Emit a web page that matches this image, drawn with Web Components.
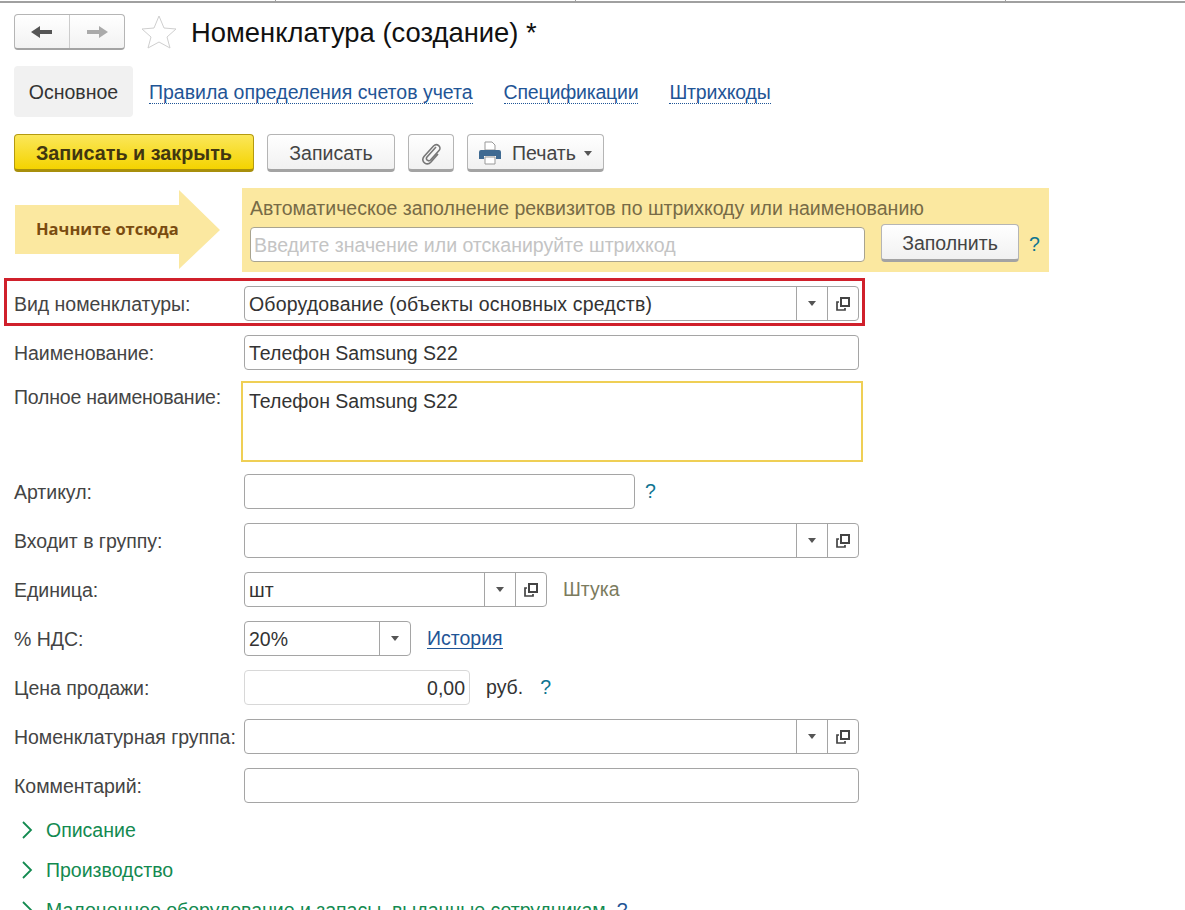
<!DOCTYPE html>
<html>
<head>
<meta charset="utf-8">
<title>Номенклатура</title>
<style>
  html, body { margin: 0; background: #fff; }
  body { height: 910px; overflow: hidden; font: 19.5px "Liberation Sans", Arial, sans-serif; color: #333; }
</style>
</head>
<body>
<item-form></item-form>

<script>
const copyIcon = `<svg width="16" height="16" viewBox="0 0 16 16" fill="none" stroke="#444" stroke-width="2"><path d="M6 2h8v8H6z"/><path d="M4 6H2v8h8v-2" stroke-width="1.7"/></svg>`

class ToolBtn extends HTMLElement {
  constructor() {
    super()
    this.attachShadow({ mode: "open" })
    this.shadowRoot.innerHTML = `
      <style>
        :host { display: inline-flex; align-items: center; justify-content: center; gap: 11px; box-sizing: border-box; height: 38px; padding: 2px 0 0; border: 1px solid #b5b5b5; border-bottom: 3px solid #a3a3a3; border-radius: 4px; background: linear-gradient(#fff, #f1f1f1); color: #444; white-space: nowrap; }
        :host([primary]) { border-color: #b49a10; border-bottom-color: #a88f0c; background: linear-gradient(#fbe75a, #f4d300); color: #413610; font-weight: bold; font-size: 19.8px; }
      </style>
      <slot></slot>`
  }
}

class PageTabs extends HTMLElement {
  constructor() {
    super()
    this.attachShadow({ mode: "open" })
    this.shadowRoot.innerHTML = `
      <style>
        :host { display: flex; align-items: center; gap: 31px; height: 51px; }
        .on { box-sizing: border-box; width: 119px; height: 51px; margin-right: -15px; padding-top: 2px; display: flex; align-items: center; justify-content: center; background: #f1f1f1; border-radius: 4px; color: #333; }
        span { margin-top: 2px; color: #1f5596; border-bottom: 1px dotted #1f5596; line-height: 21px; letter-spacing: -0.2px; }
      </style>
      <div class="on">Основное</div>
      <span style="letter-spacing:0">Правила определения счетов учета</span>
      <span>Спецификации</span>
      <span>Штрихкоды</span>`
  }
}

class TextField extends HTMLElement {
  constructor() {
    super()
    this.attachShadow({ mode: "open" })
  }
  connectedCallback() {
    const w = this.getAttribute("width") || "615"
    const buttons = this.getAttribute("buttons") || ""
    let btns = ""
    if (buttons.includes("d")) btns += `<div class="b"><i></i></div>`
    if (buttons.includes("o")) btns += `<div class="b">${copyIcon}</div>`
    this.shadowRoot.innerHTML = `
      <style>
        :host { display: flex; align-items: center; height: 35px; }
        label { width: 230px; margin-left: 14px; padding-top: 2px; flex: none; color: #444; white-space: nowrap; letter-spacing: -0.03px; }
        .box { display: flex; box-sizing: border-box; height: 35px; width: ${w}px; border: 1px solid #a5a5a5; border-radius: 4px; background: #fff; flex: none; }
        :host([soft]) .box { border-color: #d8d8d8; }
        .val { flex: 1; padding: 2px 4px 0 4px; display: flex; align-items: center; color: #333; white-space: nowrap; }
        :host([right]) .val { justify-content: flex-end; }
        .b { width: 30px; border-left: 1px solid #a5a5a5; display: flex; align-items: center; justify-content: center; }
        .b i { width: 0; height: 0; border: 4px solid transparent; border-top: 5px solid #555; border-bottom: 0; }
        .after { display: flex; align-items: center; }
      </style>
      <label>${this.getAttribute("label")}</label>
      <div class="box"><div class="val"><slot></slot></div>${btns}</div>
      <div class="after"><slot name="after"></slot></div>`
  }
}

class SectionRow extends HTMLElement {
  constructor() {
    super()
    this.attachShadow({ mode: "open" })
    this.shadowRoot.innerHTML = `
      <style>
        :host { display: flex; align-items: center; gap: 13px; height: 24px; margin-left: 21px; color: #138a50; white-space: nowrap; }
      </style>
      <svg width="12" height="18" viewBox="0 0 12 18" fill="none" stroke="#138a50" stroke-width="1.8"><path d="M2 1l8 8-8 8"/></svg>
      <slot></slot>`
  }
}

class ItemForm extends HTMLElement {
  constructor() {
    super()
    this.attachShadow({ mode: "open" })
    this.shadowRoot.innerHTML = `
      <style>
        :host { display: block; position: relative; height: 910px; overflow: hidden; }
        .topline { height: 2px; margin-top: 1px; background: #a0a0a0; margin-bottom: 11px; }
        .tick { position: absolute; top: 0; width: 1px; height: 2px; background: #a0a0a0; }
        .head { display: flex; align-items: center; height: 36px; margin-left: 14px; }
        .nav { display: flex; box-sizing: border-box; width: 111px; height: 36px; border: 1px solid #b5b5b5; border-bottom: 2px solid #a3a3a3; border-radius: 4px; background: linear-gradient(#fff, #f2f2f2); }
        .nav div { flex: 1; display: flex; align-items: center; justify-content: center; }
        .nav div + div { border-left: 1px solid #ccc; }
        h1 { margin: 0 0 0 14px; padding-top: 2px; font-size: 27.4px; font-weight: normal; color: #111; white-space: nowrap; }
        .star { margin-left: 16px; }
        page-tabs { margin: 16px 0 0 14px; }
        .cmd { display: flex; gap: 13px; margin: 17px 0 0 14px; }
        .start { display: flex; margin: 16px 0 0 14px; height: 84px; }
        .arrow { position: relative; width: 206px; margin-right: 22px; display: flex; align-items: center; padding: 0 0 3px 22px; box-sizing: border-box; }
        .arrow svg { position: absolute; left: 0; top: 0; }
        .arrow b { position: relative; font: bold 16.500px "Open Sans", sans-serif; color: #7a4c10; white-space: nowrap; }
        .panel { box-sizing: border-box; width: 807px; background: #fbe8a0; padding: 9px 8px 0; }
        .panel p { margin: 0; height: 22px; color: #776b46; white-space: nowrap; }
        .line { display: flex; align-items: center; margin-top: 8px; }
        .input { box-sizing: border-box; width: 615px; height: 35px; border: 1px solid #a9a48f; border-radius: 4px; background: #fff; color: #c4c4c4; display: flex; align-items: center; padding: 2px 0 0 3px; white-space: nowrap; }
        .line tool-btn { width: 138px; margin: -3px 0 0 16px; }
        .q { color: #0e7491; }
        .line .q { margin-left: 10px; }
        .fields { margin-top: 14px; display: flex; flex-direction: column; gap: 14px; }
        .mark { position: absolute; left: 4px; top: 278px; width: 861px; height: 48px; box-sizing: border-box; border: 3px solid #d0202b; pointer-events: none; }
        .full { display: flex; height: 81px; margin: -3px 0 -2px; }
        .full label { width: 227px; margin-left: 14px; flex: none; color: #444; padding-top: 5px; white-space: nowrap; letter-spacing: -0.2px; }
        .full div { box-sizing: border-box; width: 622px; height: 81px; border: 2px solid #efcf55; padding: 7px 6px; color: #333; }
        .after { margin-left: 16px; }
        .green { color: #7b7b5e; }
        .link { color: #1f5596; border-bottom: 1px solid #1f5596; line-height: 20px; }
        .sections { margin-top: 15px; display: flex; flex-direction: column; gap: 16px; }
      </style>
      <div class="topline"></div>
      <i class="tick" style="left:275px"></i><i class="tick" style="left:575px"></i><i class="tick" style="left:1005px"></i>
      <div class="head">
        <div class="nav">
          <div><svg width="22" height="14" viewBox="0 0 22 14" fill="#555"><path d="M0 7l9-6v4h12v4H9v4z"/></svg></div>
          <div><svg width="22" height="14" viewBox="0 0 22 14" fill="#aaa"><path d="M22 7l-9-6v4H1v4h12v4z"/></svg></div>
        </div>
        <svg class="star" width="36" height="34" viewBox="0 0 36 34" fill="none" stroke="#cfcfcf" stroke-width="1"><path d="M18 1l5 12 12 1-9 8 3 11-11-6-11 6 3-11-9-8 12-1z"/></svg>
        <h1>Номенклатура (создание) *</h1>
      </div>
      <page-tabs></page-tabs>
      <div class="cmd">
        <tool-btn primary style="width:240px">Записать и закрыть</tool-btn>
        <tool-btn style="width:128px">Записать</tool-btn>
        <tool-btn style="width:46px"><svg width="22" height="24" viewBox="0 0 22 24" fill="none" stroke="#777" stroke-width="1.6"><path d="M16 6L7 16c-2 2.500 1.500 5 3.500 3L19 9.500c3-3.500-2-8-5.500-4.500L4 15.500c-4 5 3 10 7 5.500l7-8"/></svg></tool-btn>
        <tool-btn style="width:137px"><svg width="22" height="24" viewBox="0 0 22 24"><path d="M6 1h7l3 3v5H6z" fill="#fff" stroke="#999"/><path d="M2 9h18a2 2 0 0 1 2 2v7h-5v-3H5v3H0v-7a2 2 0 0 1 2-2z" fill="#3f6a92"/><path d="M6 16h10v7H6z" fill="#fff" stroke="#999"/></svg><span>Печать</span><svg width="8" height="5" viewBox="0 0 8 5" fill="#555" style="margin-left:-3px"><path d="M0 0h8L4 5z"/></svg></tool-btn>
      </div>
      <div class="start">
        <div class="arrow">
          <svg width="206" height="84" viewBox="0 0 206 84" fill="#fbe8a0"><path d="M1 17h164V2l41 40-41 39V66H1z"/></svg>
          <b>Начните отсюда</b>
        </div>
        <div class="panel">
          <p>Автоматическое заполнение реквизитов по штрихкоду или наименованию</p>
          <div class="line">
            <div class="input">Введите значение или отсканируйте штрихкод</div>
            <tool-btn>Заполнить</tool-btn>
            <span class="q">?</span>
          </div>
        </div>
      </div>
      <div class="fields">
        <text-field label="Вид номенклатуры:" buttons="do"><span style="letter-spacing:.17px">Оборудование (объекты основных средств)</span></text-field>
        <text-field label="Наименование:">Телефон Samsung S22</text-field>
        <div class="full"><label>Полное наименование:</label><div>Телефон Samsung S22</div></div>
        <text-field label="Артикул:" width="391"><span slot="after" class="after q" style="margin-left:10px">?</span></text-field>
        <text-field label="Входит в группу:" buttons="do"></text-field>
        <text-field label="Единица:" width="303" buttons="do">шт<span slot="after" class="after green">Штука</span></text-field>
        <text-field label="% НДС:" width="167" buttons="d">20%<span slot="after" class="after link">История</span></text-field>
        <text-field label="Цена продажи:" width="226" soft right>0,00<span slot="after" class="after">руб.<span class="q" style="margin-left:17px">?</span></span></text-field>
        <text-field label="Номенклатурная группа:" buttons="do"></text-field>
        <text-field label="Комментарий:"></text-field>
      </div>
      <div class="sections">
        <section-row>Описание</section-row>
        <section-row>Производство</section-row>
        <section-row>Малоценное оборудование и запасы, выданные сотрудникам<span class="q" style="margin-left:-2px;color:#1f5596">?</span></section-row>
      </div>
      <div class="mark"></div>`
  }
}

customElements.define("tool-btn", ToolBtn)
customElements.define("page-tabs", PageTabs)
customElements.define("text-field", TextField)
customElements.define("section-row", SectionRow)
customElements.define("item-form", ItemForm)
</script>
</body>
</html>
